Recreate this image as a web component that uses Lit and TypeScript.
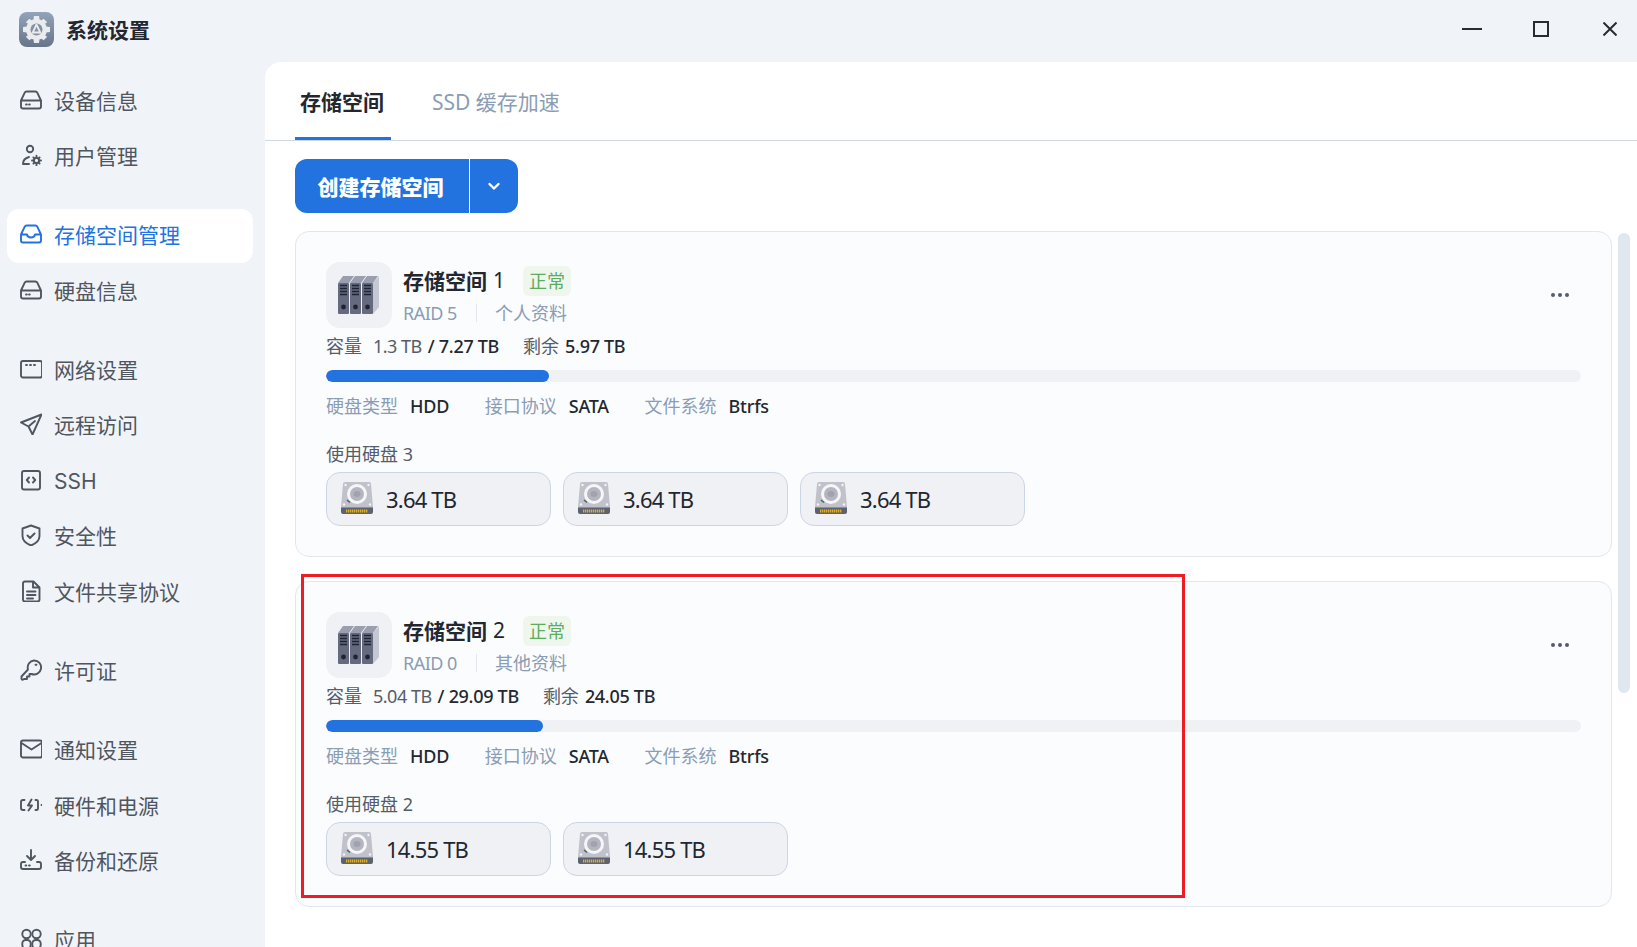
import { LitElement, html, css, svg } from 'lit';
import { customElement } from 'lit/decorators.js';

const DRIVE = svg`<path d="M1 11.5 4.6 3.8Q5.2 2.5 6.6 2.5H15.4Q16.8 2.5 17.4 3.8L21 11.5V17.5Q21 19.5 19 19.5H3Q1 19.5 1 17.5ZM1 11.5H21"/><path d="M6 15.5h.8M9 15.5h.8"/>`;

const ICONS: Record<string, unknown> = {
  drive: DRIVE,
  user: svg`<circle cx="10" cy="5" r="3.2"/><path d="M3 20Q3 14.5 9 13M3 20H9"/><circle cx="16.5" cy="16.5" r="2.6"/><path d="M16.5 11.8v2M16.5 19.2v2M12 16.5h2M19 16.5h2M13.4 13.4l1.2 1.2M18.4 18.4l1.2 1.2M13.4 19.6l1.2-1.2M18.4 14.6l1.2-1.2"/>`,
  inbox: svg`<path d="M1 11.5 4.6 3.8Q5.2 2.5 6.6 2.5H15.4Q16.8 2.5 17.4 3.8L21 11.5V17.5Q21 19.5 19 19.5H3Q1 19.5 1 17.5ZM1 11.5H7Q7.5 14.5 11 14.5T15 11.5H21"/>`,
  net: svg`<rect x="1" y="3" width="21" height="16.500" rx="2"/><path d="M6 7h1M10 7h1M14 7h1"/>`,
  send: svg`<path d="M21.500 1.500 1 9.500 8.500 13.500 12.500 21.500ZM8.500 13.500 15 8"/>`,
  code: svg`<rect x="2" y="2" width="18" height="18.500" rx="2"/><path d="M9 8.500 6.800 11 9 13.500M13 8.500 15.200 11 13 13.500"/>`,
  shield: svg`<path d="M11 1.500 19.500 4.500V12Q19.500 18 11 21.500 2.500 18 2.500 12V4.500ZM7.500 11.500 10 14 14.500 9.500"/>`,
  doc: svg`<path d="M3 3.500Q3 1.500 5 1.500H13.500L19.500 7.500V19.500Q19.500 21.500 17.500 21.500H5Q3 21.500 3 19.500ZM13 1.500V7.500H19.500M7 11.500H15.500M7 15H15.500M7 18.500H13"/>`,
  key: svg`<path d="M14 1.500A7 7 0 1 1 11.500 15L9.500 15V17.500H7V20H4Q2 21.500 1.500 20V17.500L8 10.500A7 7 0 0 1 14 1.500Z"/><path d="M15.500 5.800h1"/>`,
  mail: svg`<rect x="1" y="2.500" width="21" height="17" rx="2"/><path d="M1.500 5 11.500 11.500 21.500 5"/>`,
  power: svg`<path d="M4.500 6H3Q1 6 1 8V14Q1 16 3 16H4.500M15.500 6H16.500M15.500 16H16.500M16.500 6Q18 6 18 8V14Q18 16 16.500 16M11.500 5.500 8 11.500H12L8.500 16.500M21.500 11h.5"/>`,
  backup: svg`<path d="M11 1V10.500M7 7 11 11 15 7M5 13H3Q1 13 1 15V18Q1 20 3 20H19Q21 20 21 18V15Q21 13 19 13H17"/><path d="M5.500 16.500h.8M9 16.500h.8"/>`,
  apps: svg`<circle cx="6.500" cy="6" r="4.200"/><circle cx="16.500" cy="6" r="4.200"/><rect x="2.300" y="12" width="8.400" height="8.400" rx="3.500"/><rect x="12.300" y="12" width="8.400" height="8.400" rx="3.500"/>`,
};

const NAV_GROUPS: { icon: string; label: string; active?: boolean; latin?: boolean }[][] = [
  [{ icon: 'drive', label: '设备信息' }, { icon: 'user', label: '用户管理' }],
  [{ icon: 'inbox', label: '存储空间管理', active: true }, { icon: 'drive', label: '硬盘信息' }],
  [
    { icon: 'net', label: '网络设置' },
    { icon: 'send', label: '远程访问' },
    { icon: 'code', label: 'SSH', latin: true },
    { icon: 'shield', label: '安全性' },
    { icon: 'doc', label: '文件共享协议' },
  ],
  [{ icon: 'key', label: '许可证' }],
  [
    { icon: 'mail', label: '通知设置' },
    { icon: 'power', label: '硬件和电源' },
    { icon: 'backup', label: '备份和还原' },
  ],
  [{ icon: 'apps', label: '应用' }],
];

const POOLS = [
  {
    name: '存储空间',
    index: '1',
    raid: 'RAID 5',
    note: '个人资料',
    used: '1.3 TB',
    total: '7.27 TB',
    free: '5.97 TB',
    pct: 17.8,
    disks: ['3.64 TB', '3.64 TB', '3.64 TB'],
  },
  {
    name: '存储空间',
    index: '2',
    raid: 'RAID 0',
    note: '其他资料',
    used: '5.04 TB',
    total: '29.09 TB',
    free: '24.05 TB',
    pct: 17.3,
    disks: ['14.55 TB', '14.55 TB'],
  },
];

const appLogo = html`<svg class="logo" viewBox="0 0 35 35">
  <defs>
    <linearGradient id="logoBg" x1="0" y1="0" x2="0" y2="1">
      <stop offset="0" stop-color="#93a3b8" />
      <stop offset="1" stop-color="#66758a" />
    </linearGradient>
  </defs>
  <rect width="35" height="35" rx="8" fill="url(#logoBg)" />
  <g fill="#e9ebee">
    <circle cx="17.500" cy="17.500" r="10.500" />
    <path
      d="M15 4h5l.6 4h-6.200zM15 31h5l.6-4h-6.200zM4 15v5l4 .6v-6.200zM31 15v5l-4 .6v-6.200zM6.800 10.300l3.500-3.500 3.300 2.300-3.500 3.500zM28.200 10.300l-3.500-3.500-3.300 2.300 3.500 3.500zM6.800 24.700l3.500 3.500 3.300-2.300-3.500-3.500zM28.200 24.700l-3.500 3.500-3.300-2.300 3.500-3.500z"
    />
  </g>
  <circle cx="17.500" cy="17.500" r="6" fill="#8190a4" />
  <path d="M17.500 12.500 13.300 21.500M17.500 12.500 21.700 21.500M14.500 20.500H20.500" stroke="#e9ebee" stroke-width="1.800" fill="none" />
</svg>`;

const bookAt = (x: number) => svg`
  <path d="M${x} 21 L${x + 5} 14 H${x + 16} L${x + 11} 21Z" fill="#9a9eae" />
  <rect x=${x} y="21" width="11" height="31" rx="1" fill="#656a7f" />
  <path d="M${x + 2} 23.500h7M${x + 2} 26.500h7M${x + 2} 29.500h7M${x + 2} 32.500h7" stroke="#1f2430" stroke-width="1.600" />
  <circle cx=${x + 5.5} cy="45" r="2.400" fill="#1f2430" />`;

const poolIcon = html`<svg class="pool-icon" viewBox="0 0 66 66">
  <path d="M47 21 L53 14 V45 L47 52Z" fill="#c4c8d2" />
  ${bookAt(12)} ${bookAt(24)} ${bookAt(36)}
</svg>`;

const pins = [5, 7, 9, 11, 13, 15, 17, 19, 21, 23, 25];

const diskIcon = html`<svg class="disk-icon" viewBox="0 0 32 32">
  <path d="M2 2Q2 0 4 0H28Q30 0 30 2L32 25H0Z" fill="#c0c2cb" />
  <path d="M0 25H32V30Q32 32 30 32H2Q0 32 0 30Z" fill="#5d6270" />
  <path d="M0 25H32V26H0Z" fill="#8d909c" />
  <circle cx="16" cy="12" r="10" fill="#f6f6f8" />
  <circle cx="16" cy="12" r="7" fill="#b3b5c0" />
  <ellipse cx="16" cy="12" rx="3.500" ry="3" fill="#a0a2ae" />
  <path d="M6 18 9 20.500" stroke="#555a68" stroke-width="1.500" />
  <g fill="#f3f3f5">
    <circle cx="4.500" cy="3" r="1.200" /><circle cx="27.500" cy="3" r="1.200" />
    <circle cx="3" cy="22.500" r="1.200" /><circle cx="29" cy="22.500" r="1.200" />
  </g>
  ${pins.map(x => svg`<rect x=${x} y="27.500" width="1.300" height="3" fill="#e0b020" />`)}
</svg>`;

@customElement('app-root')
export class AppRoot extends LitElement {
  static override styles = css`
    :host {
      display: block;
      width: 1637px;
      height: 947px;
      overflow: hidden;
      background: #f0f4f9;
      font-family: 'Noto Sans', 'Noto Sans CJK SC', sans-serif;
      color: #23272f;
    }
    .titlebar {
      height: 62px;
      display: flex;
      align-items: center;
      padding-left: 19px;
      box-sizing: border-box;
    }
    .logo {
      width: 35px;
      height: 35px;
      margin-top: -3px;
    }
    .app-title {
      margin-left: 12px;
      font-size: 21px;
      font-weight: 700;
      color: #23272f;
      margin-top: -4px;
    }
    .win-controls {
      margin-left: auto;
      display: flex;
      align-items: center;
      height: 100%;
      margin-top: -4px;
      margin-right: 20px;
      gap: 51px;
    }
    .win-controls svg {
      display: block;
      fill: none;
      stroke: #272b33;
      stroke-width: 2;
    }
    .win-controls svg:last-child {
      margin-left: 3px;
    }
    .body {
      display: flex;
      height: 885px;
    }
    .sidebar {
      width: 265px;
      flex: none;
      box-sizing: border-box;
      padding: 12.5px 12px 0 7px;
      display: flex;
      flex-direction: column;
      gap: 25.2px;
      overflow: hidden;
    }
    .nav-group {
      display: flex;
      flex-direction: column;
      gap: 1.5px;
    }
    .nav-item {
      height: 54px;
      flex: none;
      box-sizing: border-box;
      display: flex;
      align-items: center;
      gap: 12px;
      padding: 0 0 4px 13px;
      border-radius: 12px;
      font-family: Inter, 'Noto Sans CJK SC', sans-serif;
      font-size: 21px;
      color: #50565f;
    }
    .nav-item svg {
      width: 22px;
      height: 22px;
      flex: none;
      fill: none;
      stroke: currentColor;
      stroke-width: 1.900;
      stroke-linejoin: round;
      stroke-linecap: round;
    }
    .nav-item .latin {
      margin-top: 4px;
    }
    .nav-item.active {
      background: #fff;
      color: #2272df;
    }
    .main {
      flex: 1;
      min-width: 0;
      background: #fff;
      border-top-left-radius: 16px;
      display: flex;
      flex-direction: column;
    }
    .tabs {
      height: 79px;
      flex: none;
      box-sizing: border-box;
      border-bottom: 1px solid #cfd9e6;
      padding-left: 30px;
      display: flex;
      gap: 36px;
    }
    .tab {
      height: 78px;
      box-sizing: border-box;
      padding: 24px 7px 0 5px;
      font-size: 21px;
      line-height: 32px;
      color: #8a9db5;
    }
    .tab.active {
      font-weight: 700;
      color: #23272f;
      border-bottom: 3px solid #2272df;
    }
    .content {
      flex: 1;
      min-height: 0;
      display: flex;
      padding-left: 30px;
    }
    .column {
      width: 1317px;
      flex: none;
      padding-top: 18px;
    }
    .split-btn {
      display: inline-flex;
      height: 54px;
      border-radius: 12px;
      overflow: hidden;
      background: #2272df;
      color: #fff;
      vertical-align: top;
    }
    .split-main {
      width: 175px;
      box-sizing: border-box;
      padding-right: 3px;
      display: flex;
      align-items: center;
      justify-content: center;
      font-size: 21px;
      font-weight: 900;
      border-right: 1px solid #fff;
    }
    .split-more {
      width: 48px;
      display: flex;
      align-items: center;
      justify-content: center;
    }
    .split-more svg {
      width: 14px;
      height: 14px;
      fill: none;
      stroke: #fff;
      stroke-width: 2.400;
      stroke-linecap: round;
      stroke-linejoin: round;
    }
    .pools {
      position: relative;
      margin-top: 18px;
      display: flex;
      flex-direction: column;
      gap: 24px;
    }
    .pool {
      box-sizing: border-box;
      height: 326px;
      flex: none;
      padding: 30px;
      border: 1px solid #e2e7ef;
      border-radius: 14px;
      background: #fbfcfe;
    }
    .pool-head {
      display: flex;
      align-items: center;
    }
    .pool-icon {
      width: 66px;
      height: 66px;
      flex: none;
      border-radius: 14px;
      background: #f0f1f5;
    }
    .pool-text {
      margin-left: 11px;
      padding-top: 1px;
      flex: 1;
      min-width: 0;
    }
    .pool-title {
      display: flex;
      align-items: center;
      height: 30px;
      font-size: 21px;
    }
    .pool-title b {
      font-weight: 700;
      margin-top: -2px;
    }
    .pool-index {
      margin-left: 6px;
      margin-top: -2px;
    }
    .badge {
      margin-left: 18px;
      height: 30px;
      line-height: 30px;
      padding: 0 6px;
      border-radius: 6px;
      background: #eff6ee;
      color: #5cad5c;
      font-size: 18px;
    }
    .pool-sub {
      display: flex;
      align-items: center;
      margin-top: 4px;
      font-size: 18px;
      line-height: 26px;
      color: #8a9db5;
    }
    .lat {
      letter-spacing: -0.5px;
    }
    .sep {
      width: 1px;
      height: 18px;
      margin: 0 18px 0 19px;
      background: #e2e7ef;
    }
    .more {
      display: flex;
      gap: 3px;
      margin-right: 12px;
    }
    .more i {
      width: 4px;
      height: 4px;
      border-radius: 50%;
      background: #555c6f;
    }
    .usage {
      display: flex;
      margin-top: 4px;
      font-size: 18px;
      line-height: 28px;
      color: #555c6a;
    }
    .usage span {
      margin-right: 12px;
    }
    .usage span:first-child {
      margin-right: 11px;
    }
    .usage b {
      font-weight: 500;
      color: #23272f;
      letter-spacing: -0.3px;
    }
    .usage .total {
      margin-right: 24px;
      margin-left: -6px;
    }
    .usage .free {
      margin-left: -6px;
    }
    .bar {
      margin-top: 10px;
      height: 12px;
      border-radius: 6px;
      background: #f0f1f5;
      overflow: hidden;
    }
    .bar div {
      height: 100%;
      border-radius: 6px;
      background: #2272df;
    }
    .info {
      display: flex;
      margin-top: 10px;
      font-size: 18px;
      line-height: 28px;
      gap: 35.5px;
    }
    .info span {
      color: #8a9db5;
      margin-right: 12px;
    }
    .info b {
      font-weight: 500;
      letter-spacing: -0.2px;
    }
    .used-label {
      margin-top: 20px;
      font-size: 18px;
      line-height: 28px;
      color: #555c6a;
    }
    .disks {
      display: flex;
      gap: 12px;
      margin-top: 4px;
    }
    .disk {
      box-sizing: border-box;
      width: 225px;
      height: 54px;
      display: flex;
      align-items: center;
      gap: 13px;
      padding-left: 14px;
      border: 1px solid #cbd6e4;
      border-radius: 14px;
      background: #f0f1f5;
      font-size: 22px;
      letter-spacing: -0.8px;
      color: #23272f;
    }
    .disk-icon {
      width: 32px;
      height: 32px;
      flex: none;
      margin-top: -3px;
    }
    /* annotation frame from the screenshot, sits over the second card */
    .mark {
      position: absolute;
      left: 6px;
      top: 343px;
      width: 884px;
      height: 324px;
      box-sizing: border-box;
      border: 3px solid #ee1c25;
      pointer-events: none;
    }
    .scroll {
      flex: none;
      width: 12px;
      height: 460px;
      margin: 92px 0 0 6px;
      border-radius: 6px;
      background: #e0e7ef;
    }
  `;

  private renderPool(p: (typeof POOLS)[number]) {
    return html`
      <section class="pool">
        <div class="pool-head">
          ${poolIcon}
          <div class="pool-text">
            <div class="pool-title">
              <b>${p.name}</b><span class="pool-index">${p.index}</span><span class="badge">正常</span>
            </div>
            <div class="pool-sub"><span class="lat">${p.raid}</span><i class="sep"></i>${p.note}</div>
          </div>
          <div class="more"><i></i><i></i><i></i></div>
        </div>
        <div class="usage">
          <span>容量</span><span class="lat">${p.used}</span>
          <span class="total"><b>/ ${p.total}</b></span>
          <span>剩余</span><b class="free">${p.free}</b>
        </div>
        <div class="bar"><div style="width:${p.pct}%"></div></div>
        <div class="info">
          <div><span>硬盘类型</span><b>HDD</b></div>
          <div><span>接口协议</span><b>SATA</b></div>
          <div><span>文件系统</span><b>Btrfs</b></div>
        </div>
        <div class="used-label">使用硬盘 ${p.disks.length}</div>
        <div class="disks">
          ${p.disks.map(d => html`<div class="disk">${diskIcon}<span>${d}</span></div>`)}
        </div>
      </section>
    `;
  }

  override render() {
    return html`
      <header class="titlebar">
        ${appLogo}
        <div class="app-title">系统设置</div>
        <div class="win-controls">
          <svg width="20" height="16" viewBox="0 0 20 16"><path d="M0 8H20" /></svg>
          <svg width="16" height="16" viewBox="0 0 16 16"><rect x="1" y="1" width="14" height="14" /></svg>
          <svg width="14" height="14" viewBox="0 0 14 14"><path d="M0.500 0.500 13.500 13.500M13.500 0.500 0.500 13.500" /></svg>
        </div>
      </header>
      <div class="body">
        <nav class="sidebar">
          ${NAV_GROUPS.map(
            group => html`<div class="nav-group">
              ${group.map(
                item => html`
                  <div class="nav-item ${item.active ? 'active' : ''}">
                    <svg viewBox="0 0 22 22">${ICONS[item.icon]}</svg>
                    <span class=${item.latin ? 'latin' : ''}>${item.label}</span>
                  </div>
                `,
              )}
            </div>`,
          )}
        </nav>
        <main class="main">
          <div class="tabs">
            <div class="tab active">存储空间</div>
            <div class="tab">SSD 缓存加速</div>
          </div>
          <div class="content">
            <div class="column">
              <div class="split-btn">
                <div class="split-main">创建存储空间</div>
                <div class="split-more">
                  <svg viewBox="0 0 14 14"><path d="M2.500 5 7 9.500 11.500 5" /></svg>
                </div>
              </div>
              <div class="pools">
                ${POOLS.map(p => this.renderPool(p))}
                <div class="mark"></div>
              </div>
            </div>
            <div class="scroll"></div>
          </div>
        </main>
      </div>
    `;
  }
}

declare global {
  interface HTMLElementTagNameMap {
    'app-root': AppRoot;
  }
}
